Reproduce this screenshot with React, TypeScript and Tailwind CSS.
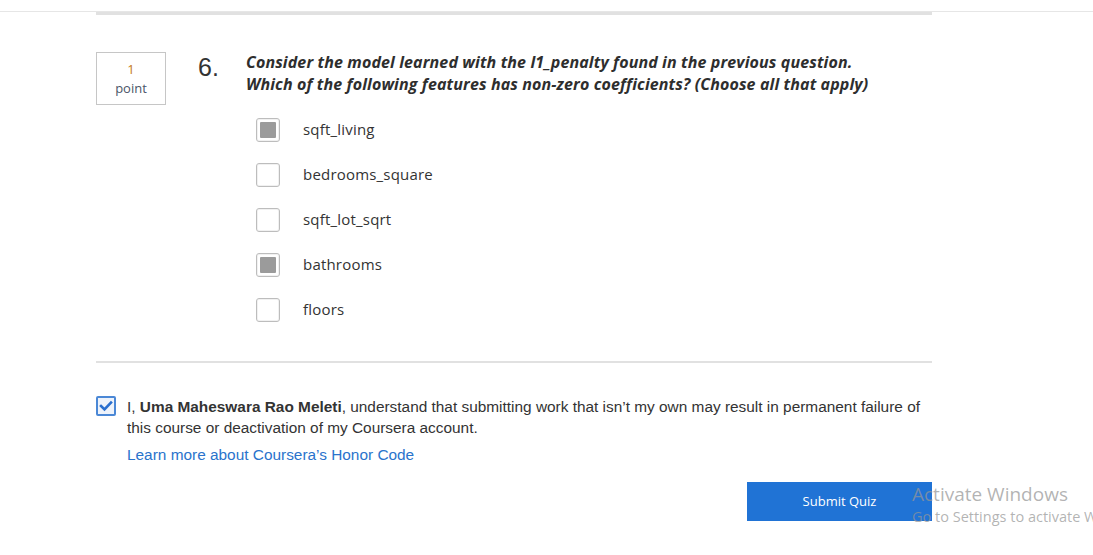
import React from "react";

const options = [
  { label: "sqft_living", checked: true },
  { label: "bedrooms_square", checked: false },
  { label: "sqft_lot_sqrt", checked: false },
  { label: "bathrooms", checked: true },
  { label: "floors", checked: false },
];

function OptionBox({ checked }: { checked: boolean }) {
  return (
    <div className="w-[24px] h-[24px] rounded-[3px] border border-[#bdbdbd] bg-white p-[3px] shadow-[inset_0_0_0_1px_#f1f1f1]">
      {checked ? <div className="w-full h-full bg-[#9b9b9b] rounded-[1px]" /> : null}
    </div>
  );
}

export default function App() {
  return (
    <div className="relative w-[1093px] h-[555px] bg-white overflow-hidden font-['Open_Sans',sans-serif]">
      <div className="h-[11px]" />
      <div className="h-px bg-[#e6e6e6]" />
      <div className="ml-[96px] w-[836px] h-[3px] bg-[#e1e1e1]" />

      <div className="ml-[96px] w-[836px] flex flex-col">
        {/* Question */}
        <div className="flex items-start mt-[34px]">
          <div className="mt-[3px] w-[70px] h-[53px] border border-[#c6c6c6] flex flex-col items-center pt-[7px] text-[13px] leading-[19px]">
            <span className="text-[#c47a22]">1</span>
            <span className="text-[#4a5568]">point</span>
          </div>
          <div className="ml-[32px] w-[48px] mt-[6px] font-['Liberation_Sans',Arial,sans-serif] text-[25px] leading-[25px] text-[#333]">
            6.
          </div>
          <div className="flex flex-col">
            <div className="mt-[2px] text-[16px] leading-[22px] tracking-[0.12px] font-bold italic text-[#2e2e2e] whitespace-nowrap">
              <div>Consider the model learned with the l1_penalty found in the previous question.</div>
              <div>Which of the following features has non-zero coefficients? (Choose all that apply)</div>
            </div>
            <div className="mt-[12px] pl-[10px] flex flex-col">
              {options.map((o) => (
                <div key={o.label} className="h-[45px] flex items-center">
                  <OptionBox checked={o.checked} />
                  <span className="ml-[23px] text-[15px] tracking-[0.2px] text-[#333]">{o.label}</span>
                </div>
              ))}
            </div>
          </div>
        </div>

        {/* Separator */}
        <div className="mt-[29px] h-[2px] bg-[#e1e1e1]" />

        {/* Honor code */}
        <div className="mt-[33px] flex items-start">
          <div className="w-[20px] h-[20px] rounded-[2px] border-2 border-[#4b88d6] bg-[#eef3fb] flex items-center justify-center">
            <svg width="14" height="12" viewBox="0 0 14 12">
              <polyline points="2,6 5.5,9.5 12,2.5" fill="none" stroke="#2a6fcf" strokeWidth="2.6" strokeLinecap="square" />
            </svg>
          </div>
          <div className="ml-[11px] w-[805px] font-['Liberation_Sans',Arial,sans-serif] text-[15.4px] leading-[21px] text-[#333]">
            <p>
              I, <b className="font-bold">Uma Maheswara Rao Meleti</b>, understand that submitting work that isn’t my own may result in permanent failure of this course or deactivation of my Coursera account.
            </p>
            <p className="mt-[6px] text-[#2a73cc]">Learn more about Coursera’s Honor Code</p>
          </div>
        </div>

        {/* Submit */}
        <div className="mt-[17px] flex justify-end">
          <div className="w-[185px] h-[39px] bg-[#2073d5] flex items-center justify-center text-white text-[13px] font-medium">
            Submit Quiz
          </div>
        </div>
      </div>

      {/* Windows watermark */}
      <div className="absolute left-[912px] top-[482px] w-[181px] overflow-hidden whitespace-nowrap text-[rgba(150,150,150,0.72)] pointer-events-none">
        <div className="text-[19px] leading-[24px]">Activate Windows</div>
        <div className="text-[14.5px] leading-[22px]">Go to Settings to activate W</div>
      </div>
    </div>
  );
}
